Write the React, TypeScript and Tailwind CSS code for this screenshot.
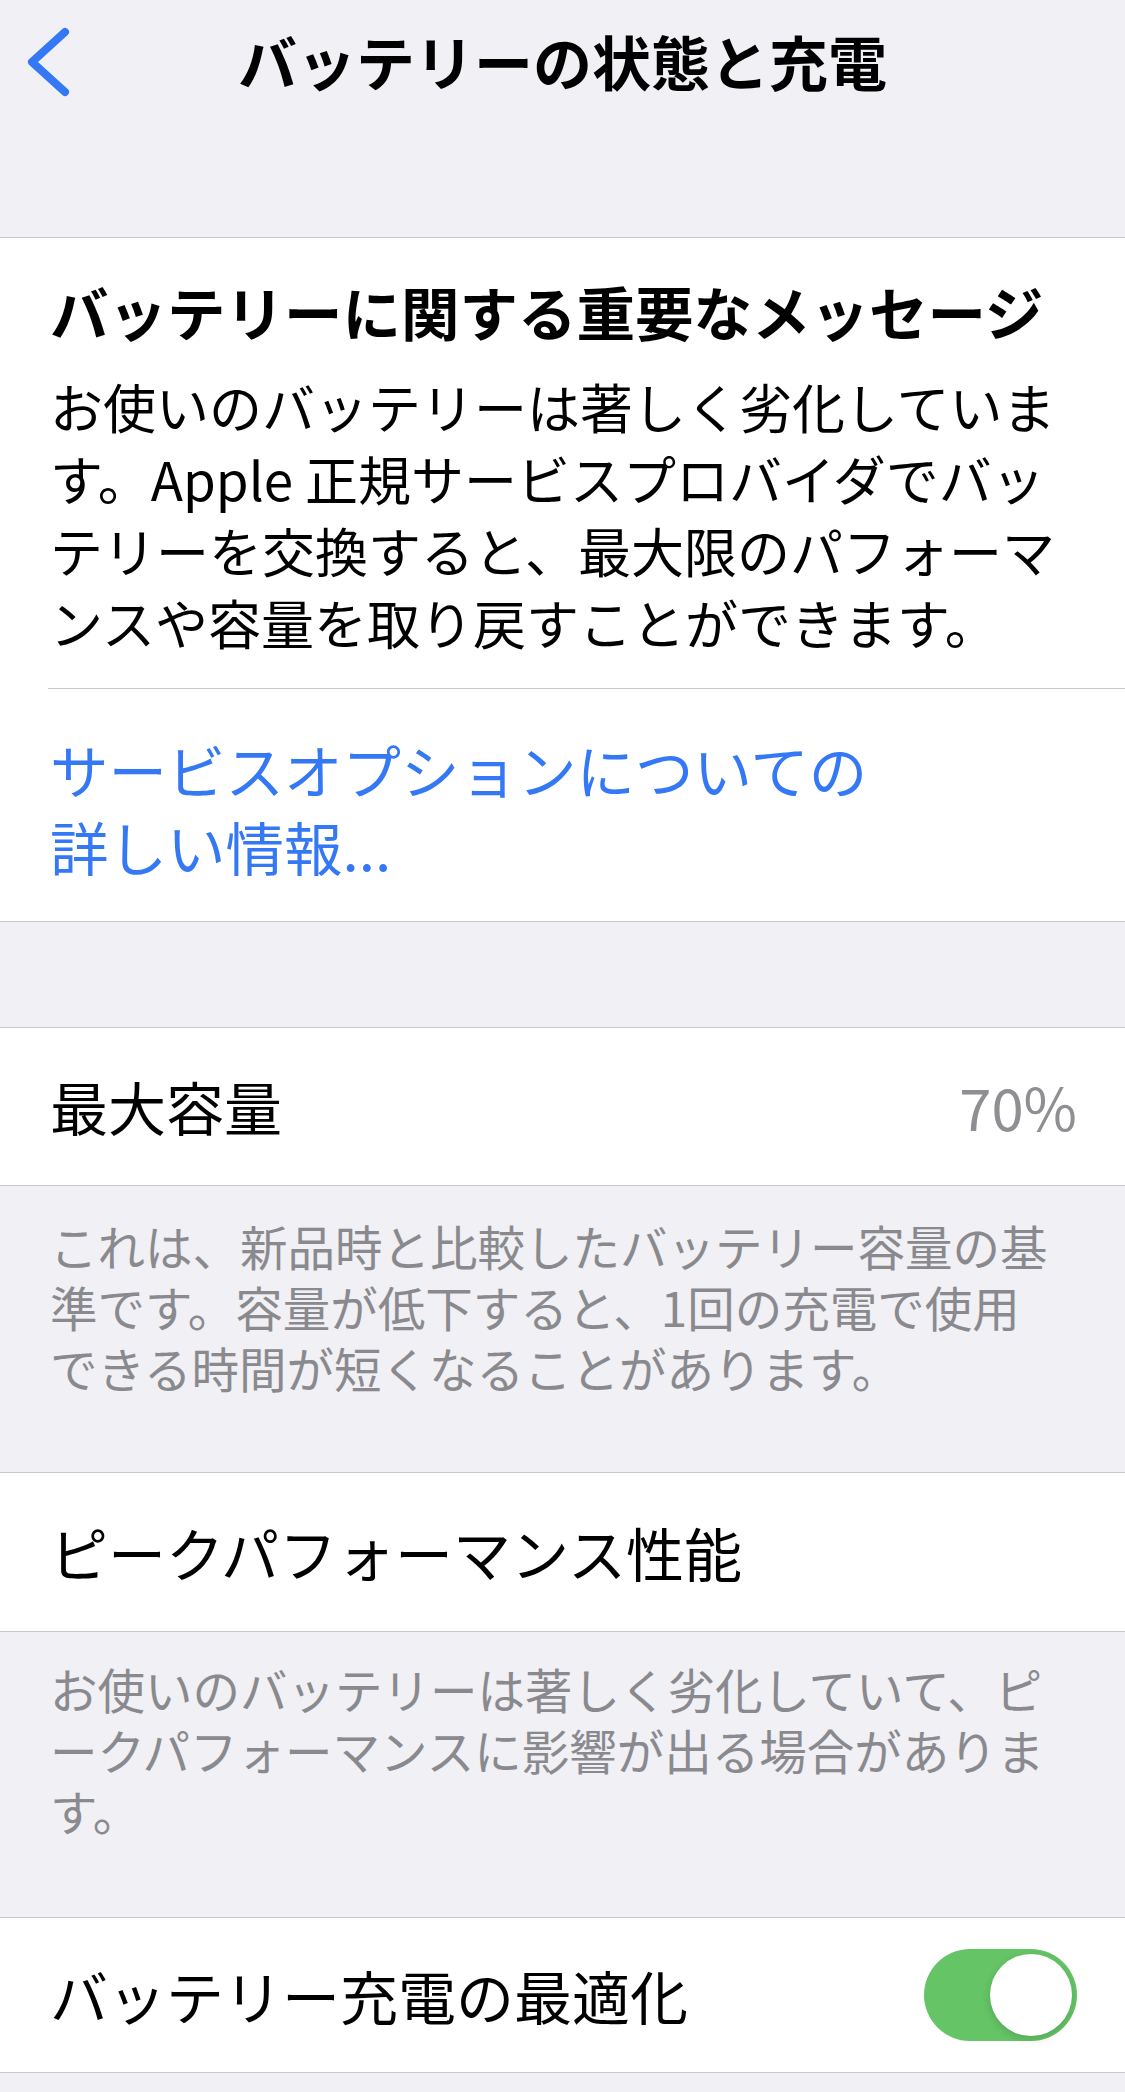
import React from "react";

function Chevron() {
  return (
    <svg width="48" height="76" viewBox="0 0 48 76" className="ml-[24px]">
      <path
        d="M41 9 L8 39 L41 69"
        fill="none"
        stroke="#3478f6"
        strokeWidth="8"
        strokeLinecap="round"
        strokeLinejoin="round"
      />
    </svg>
  );
}

function Toggle() {
  return (
    <div className="w-[153px] h-[92px] rounded-full bg-[#65c466] flex items-center justify-end pr-[5px]">
      <div className="w-[82px] h-[82px] rounded-full bg-white shadow-[0_3px_8px_rgba(0,0,0,0.15)]" />
    </div>
  );
}

function Row({ children }: { children: React.ReactNode }) {
  return (
    <div className="bg-white border-y border-[#c8c7cc] flex items-center justify-between pl-[50px] pr-[48px]">
      {children}
    </div>
  );
}

export default function App() {
  return (
    <div className="min-h-[2092px] bg-[#f0f0f5] font-['Noto_Sans_CJK_JP',sans-serif] text-black">
      {/* NAV */}
      <div className="h-[237px]">
        <div className="h-[122px] grid grid-cols-[1fr_auto_1fr] items-center">
          <Chevron />
          <h1 className="text-[59px] leading-[70px] font-bold">バッテリーの状態と充電</h1>
          <div />
        </div>
      </div>

      {/* IMPORTANT MESSAGE */}
      <section className="bg-white border-y border-[#c8c7cc]">
        <div className="pl-[50px] pr-[20px] pt-[38px]">
          <h2 className="text-[58.5px] leading-[70px] font-bold">
            バッテリーに関する重要なメッセージ
          </h2>
          <p className="mt-[24px] text-[53px] leading-[72px]">
            お使いのバッテリーは著しく劣化していま
            <br />
            す。Apple 正規サービスプロバイダでバッ
            <br />
            テリーを交換すると、最大限のパフォーマ
            <br />
            ンスや容量を取り戻すことができます。
          </p>
        </div>
        <div className="mt-[30px] ml-[48px] h-px bg-[#c8c7cc]" />
        <div className="pl-[50px] pr-[20px] pt-[41px] pb-[37px]">
          <p className="text-[58.5px] leading-[77px] text-[#3478f6]">
            サービスオプションについての
            <br />
            詳しい情報...
          </p>
        </div>
      </section>

      <div className="h-[105px]" />

      {/* MAX CAPACITY */}
      <Row>
        <div className="h-[157px] flex items-center text-[58px]">最大容量</div>
        <span className="text-[58px] text-[#8e8e93]">70%</span>
      </Row>
      <div className="h-[286px] pl-[50px] pr-[20px] pt-[29px]">
        <p className="text-[47.5px] leading-[61px] text-[#8a8a8e]">
          これは、新品時と比較したバッテリー容量の基
          <br />
          準です。容量が低下すると、1回の充電で使用
          <br />
          できる時間が短くなることがあります。
        </p>
      </div>

      {/* PEAK PERFORMANCE */}
      <Row>
        <div className="h-[158px] flex items-center text-[58px]">ピークパフォーマンス性能</div>
      </Row>
      <div className="h-[285px] pl-[50px] pr-[20px] pt-[26px]">
        <p className="text-[47.5px] leading-[61px] text-[#8a8a8e]">
          お使いのバッテリーは著しく劣化していて、ピ
          <br />
          ークパフォーマンスに影響が出る場合がありま
          <br />
          す。
        </p>
      </div>

      {/* OPTIMIZED CHARGING */}
      <Row>
        <div className="h-[154px] flex items-center text-[58px]">バッテリー充電の最適化</div>
        <Toggle />
      </Row>
    </div>
  );
}
